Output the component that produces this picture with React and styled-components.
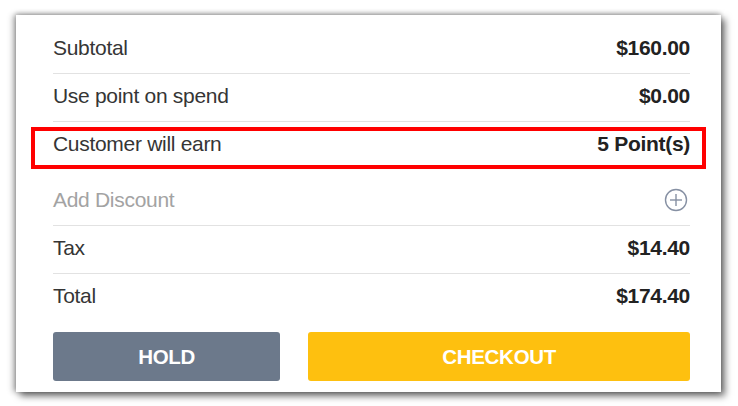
import React from "react";
import styled, { createGlobalStyle } from "styled-components";

const Global = createGlobalStyle`
  html, body { margin: 0; padding: 0; background: #ffffff; }
  body { font-family: "Liberation Sans", Arial, sans-serif; }
`;

const Page = styled.div`
  width: 738px;
  height: 406px;
  padding: 15px 0 0 16px;
  box-sizing: border-box;
  overflow: hidden;
`;

const Card = styled.div`
  width: 705px;
  height: 377px;
  box-sizing: border-box;
  background: #fff;
  padding: 11px 31px 0 37px;
  box-shadow: 4px 4px 7px rgba(0, 0, 0, 0.55), -3px 0 6px rgba(0, 0, 0, 0.3), 0 -2px 4px rgba(0, 0, 0, 0.18);
  display: flex;
  flex-direction: column;
`;

const Row = styled.div`
  position: relative;
  display: flex;
  align-items: center;
  justify-content: space-between;
  padding: 10px 0 ${(p) => (p.$tall ? "22px" : "13px")} 0;
  border-bottom: ${(p) => (p.$divider ? "1.5px solid #e2e2e2" : "none")};
  line-height: 24px;
  font-size: 21px;
`;

const Highlight = styled.div`
  position: absolute;
  top: 5px;
  bottom: 9px;
  left: -22px;
  right: -16px;
  border: 4px solid #ff0000;
  pointer-events: none;
`;

const Label = styled.span`
  color: ${(p) => (p.$muted ? "#a3a3a3" : "#353535")};
  letter-spacing: -0.3px;
`;

const Value = styled.span`
  color: #222;
  font-weight: bold;
  letter-spacing: -0.3px;
`;

const PlusIcon = styled.svg`
  width: 24px;
  height: 24px;
  margin-right: 2px;
  display: block;
`;

const Buttons = styled.div`
  display: flex;
  gap: 28px;
  margin-top: 11px;
`;

const Button = styled.button`
  height: 49px;
  border: none;
  border-radius: 3px;
  background: ${(p) => p.$bg};
  color: #fff;
  font-family: "Liberation Sans", Arial, sans-serif;
  font-weight: bold;
  font-size: 20.5px;
  letter-spacing: -0.3px;
  flex: ${(p) => p.$flex};
  padding: 0;
  cursor: pointer;
`;

export default function App() {
  return (
    <>
      <Global />
      <Page>
        <Card>
          <Row $divider>
            <Label>Subtotal</Label>
            <Value>$160.00</Value>
          </Row>
          <Row $divider>
            <Label>Use point on spend</Label>
            <Value>$0.00</Value>
          </Row>
          <Row $tall>
            <Label>Customer will earn</Label>
            <Value>5 Point(s)</Value>
            <Highlight />
          </Row>
          <Row $divider>
            <Label $muted>Add Discount</Label>
            <PlusIcon viewBox="0 0 24 24" fill="none" stroke="#8690a3" strokeWidth="1.4">
              <circle cx="12" cy="12" r="10.5" />
              <line x1="12" y1="6" x2="12" y2="18" />
              <line x1="6" y1="12" x2="18" y2="12" />
            </PlusIcon>
          </Row>
          <Row $divider>
            <Label>Tax</Label>
            <Value>$14.40</Value>
          </Row>
          <Row>
            <Label>Total</Label>
            <Value>$174.40</Value>
          </Row>
          <Buttons>
            <Button $bg="#6c798b" $flex="228 0 0">HOLD</Button>
            <Button $bg="#fec00f" $flex="383 0 0">CHECKOUT</Button>
          </Buttons>
        </Card>
      </Page>
    </>
  );
}
